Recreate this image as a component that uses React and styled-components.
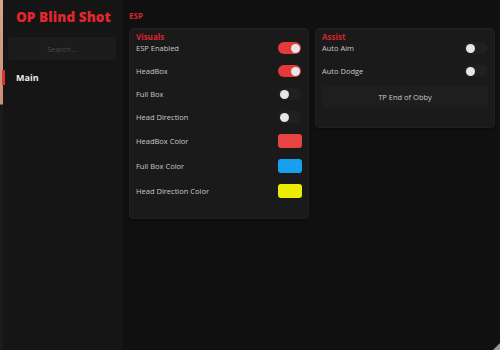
import React from "react";
import styled, { createGlobalStyle } from "styled-components";

const Global = createGlobalStyle`
  html, body { margin: 0; padding: 0; background: #101010; }
  body { font-family: "Open Sans", "Noto Sans", sans-serif; }
  * { box-sizing: border-box; }
`;

const Window = styled.div`
  position: relative;
  display: flex;
  width: 500px;
  height: 350px;
  background: #101010;
  overflow: hidden;
`;

const Edge = styled.div`
  width: 3px;
  flex-shrink: 0;
  background: linear-gradient(to bottom, #d9a488 0, #c98f74 104px, #1b1b1b 105px, #1b1b1b 100%);
`;

const Sidebar = styled.aside`
  width: 119px;
  flex-shrink: 0;
  background: #151515;
  display: flex;
  flex-direction: column;
  padding: 8px 5px 0 5px;
  border-right: 1px solid #181818;
`;

const Title = styled.h1`
  margin: 0 0 0 8px;
  font-family: "Open Sans", sans-serif;
  font-weight: 800;
  font-size: 13.5px;
  line-height: 18px;
  color: #e3262e;
  letter-spacing: 0.1px;
`;

const Search = styled.div`
  margin-top: 11px;
  height: 23px;
  border-radius: 4px;
  background: #1c1c1c;
  display: flex;
  align-items: center;
  justify-content: center;
  font-size: 7.5px;
  color: #4a4a4a;
`;

const NavItem = styled.div`
  position: relative;
  margin: 10px 0 0 0;
  height: 15px;
  display: flex;
  align-items: center;
  padding-left: 8px;
  font-size: 9px;
  font-weight: 700;
  color: #ececec;
`;

const NavMark = styled.span`
  position: absolute;
  left: -6px;
  top: 0;
  width: 3px;
  height: 15px;
  background: #d8353b;
`;

const Main = styled.main`
  flex: 1;
  display: flex;
  flex-direction: column;
  padding: 10px 6px 0 7px;
`;

const Tab = styled.div`
  font-size: 8px;
  font-weight: 700;
  color: #d8262e;
  height: 12px;
  line-height: 12px;
  margin-bottom: 6px;
`;

const Columns = styled.div`
  display: flex;
  gap: 6px;
  align-items: flex-start;
`;

const Panel = styled.section`
  width: ${(p) => p.$w}px;
  background: #1a1a1a;
  border: 1px solid #202020;
  border-radius: 4px;
  padding: 3px 6px ${(p) => p.$pb || 19}px 6px;
  display: flex;
  flex-direction: column;
  gap: 11px;
  box-shadow: 0 1px 2px rgba(0,0,0,0.4);
`;

const PanelHead = styled.div`
  font-size: 8px;
  font-weight: 700;
  color: #d8262e;
  height: 10px;
  line-height: 10px;
  margin-bottom: -11px;
`;

const Row = styled.div`
  display: flex;
  align-items: center;
  justify-content: space-between;
  height: ${(p) => p.$h || 12}px;
  font-size: 7.5px;
  color: #c9c9c9;
`;

const Toggle = styled.div`
  width: 23px;
  height: 12px;
  border-radius: 6px;
  background: ${(p) => (p.$on ? "#e43a3a" : "#202020")};
  position: relative;
  margin-right: 1px;
`;

const Knob = styled.span`
  position: absolute;
  top: 1.5px;
  left: ${(p) => (p.$on ? "12.5px" : "1.5px")};
  width: 9px;
  height: 9px;
  border-radius: 50%;
  background: #e6e6e6;
`;

const Swatch = styled.div`
  width: 24px;
  height: 14px;
  border-radius: 3px;
  background: ${(p) => p.$c};
`;

const Button = styled.div`
  height: 22px;
  margin-top: -2px;
  border-radius: 3px;
  background: #1e1e1e;
  display: flex;
  align-items: center;
  justify-content: center;
  font-size: 7.5px;
  color: #c8c8c8;
`;

const Grip = styled.div`
  position: absolute;
  right: 0;
  bottom: 0;
  width: 0;
  height: 0;
  border-left: 7px solid transparent;
  border-bottom: 7px solid #9a9a9a;
`;

const ToggleRow = ({ label, on }) => (
  <Row>
    <span>{label}</span>
    <Toggle $on={on}>
      <Knob $on={on} />
    </Toggle>
  </Row>
);

const ColorRow = ({ label, color }) => (
  <Row $h={14}>
    <span>{label}</span>
    <Swatch $c={color} />
  </Row>
);

export default function App() {
  return (
    <>
      <Global />
      <Window>
        <Edge />
        <Sidebar>
          <Title>OP Blind Shot</Title>
          <Search>Search...</Search>
          <NavItem>
            <NavMark />
            Main
          </NavItem>
        </Sidebar>
        <Main>
          <Tab>ESP</Tab>
          <Columns>
            <Panel $w={180} $pb={20}>
              <PanelHead>Visuals</PanelHead>
              <ToggleRow label="ESP Enabled" on />
              <ToggleRow label="HeadBox" on />
              <ToggleRow label="Full Box" />
              <ToggleRow label="Head Direction" />
              <ColorRow label="HeadBox Color" color="#e84343" />
              <ColorRow label="Full Box Color" color="#17a0ee" />
              <ColorRow label="Head Direction Color" color="#eded00" />
            </Panel>
            <Panel $w={180}>
              <PanelHead>Assist</PanelHead>
              <ToggleRow label="Auto Aim" />
              <ToggleRow label="Auto Dodge" />
              <Button>TP End of Obby</Button>
            </Panel>
          </Columns>
        </Main>
        <Grip />
      </Window>
    </>
  );
}
